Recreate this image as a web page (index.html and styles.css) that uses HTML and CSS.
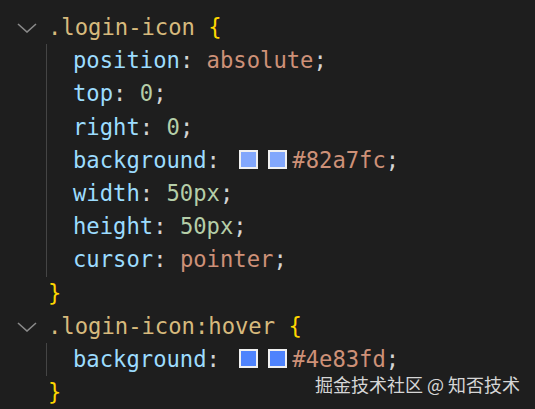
FILE: index.html
```html
<!DOCTYPE html>
<html lang="zh">
<head>
<meta charset="utf-8">
<link rel="stylesheet" href="styles.css">
</head>
<body>
<div class="editor">
  <div class="block">
    <div class="line head"><span class="fold"><svg width="20" height="10" viewBox="0 0 20 10"><path d="M1 1 L10 9 L19 1" fill="none" stroke="#8a8a8a" stroke-width="1.6"/></svg></span><span class="sel">.login-icon</span> <span class="br">{</span></div>
    <div class="body">
      <div class="line"><span class="prop">position</span><span class="p">:</span> <span class="val">absolute</span><span class="p">;</span></div>
      <div class="line"><span class="prop">top</span><span class="p">:</span> <span class="num">0</span><span class="p">;</span></div>
      <div class="line"><span class="prop">right</span><span class="p">:</span> <span class="num">0</span><span class="p">;</span></div>
      <div class="line"><span class="prop">background</span><span class="p">:</span> <span class="sw sw-a"></span><span class="sw sw-a last"></span><span class="val">#82a7fc</span><span class="p">;</span></div>
      <div class="line"><span class="prop">width</span><span class="p">:</span> <span class="num">50px</span><span class="p">;</span></div>
      <div class="line"><span class="prop">height</span><span class="p">:</span> <span class="num">50px</span><span class="p">;</span></div>
      <div class="line"><span class="prop">cursor</span><span class="p">:</span> <span class="val">pointer</span><span class="p">;</span></div>
    </div>
    <div class="line close"><span class="br">}</span></div>
  </div>
  <div class="block">
    <div class="line head"><span class="fold"><svg width="20" height="10" viewBox="0 0 20 10"><path d="M1 1 L10 9 L19 1" fill="none" stroke="#8a8a8a" stroke-width="1.6"/></svg></span><span class="sel">.login-icon:hover</span> <span class="br">{</span></div>
    <div class="body">
      <div class="line"><span class="prop">background</span><span class="p">:</span> <span class="sw sw-b"></span><span class="sw sw-b last"></span><span class="val">#4e83fd</span><span class="p">;</span></div>
    </div>
    <div class="line close"><span class="br">}</span></div>
  </div>
  <div class="mark">掘金技术社区 @ 知否技术</div>
</div>
</body>
</html>
```
FILE: styles.css
```css
html, body {
  margin: 0;
  padding: 0;
  background: #1e1e1e;
}
.editor {
  position: relative;
  width: 535px;
  height: 409px;
  overflow: hidden;
  padding-top: 11px;
  box-sizing: border-box;
  font-family: "DejaVu Sans Mono", "Liberation Mono", monospace;
  font-size: 22.2px;
  color: #d4d4d4;
}
.line {
  height: 33.2px;
  line-height: 33.2px;
  white-space: pre;
}
.head, .close {
  padding-left: 48px;
  position: relative;
}
.fold {
  position: absolute;
  left: 17px;
  top: 12px;
  width: 20px;
  height: 10px;
  display: flex;
}
.body {
  margin-left: 46px;
  border-left: 1px solid #454545;
  padding-left: 26px;
}
.sel { color: #d7ba7d; }
.br { color: #ffd700; }
.prop { color: #9cdcfe; }
.val { color: #ce9178; }
.num { color: #b5cea8; }
.p { color: #d4d4d4; }
.sw {
  display: inline-block;
  width: 19px;
  height: 19px;
  box-sizing: border-box;
  border: 2px solid #f0f0f0;
  margin-left: 6px;
  margin-right: 10px;
  vertical-align: -1px;
}
.sw.last {
  margin-left: 0;
  margin-right: 5px;
}
.sw-a { background: #82a7fc; }
.sw-b { background: #4e83fd; }
.mark {
  position: absolute;
  left: 315px;
  top: 371px;
  font-family: "Noto Sans CJK SC", "Noto Sans", sans-serif;
  font-size: 18px;
  color: #d6d6d6;
  white-space: pre;
}
```
